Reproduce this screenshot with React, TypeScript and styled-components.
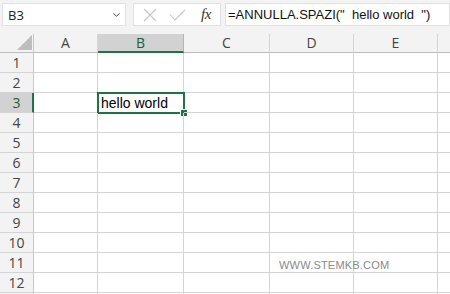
import React from "react";
import styled, { createGlobalStyle } from "styled-components";

const Global = createGlobalStyle`
  html, body { margin: 0; padding: 0; background: #ffffff; overflow: hidden; }
  body { width: 450px; height: 294px; font-family: "Liberation Sans", Arial, sans-serif; }
`;

const COLS = [
  { key: "A", w: 64 },
  { key: "B", w: 86 },
  { key: "C", w: 86 },
  { key: "D", w: 84 },
  { key: "E", w: 84 },
  { key: "", w: 60 },
];
const ROW_HEAD = 34;
const ROWS = Array.from({ length: 13 }, (_, i) => i + 1);
const GREEN = "#217346";
const GRID = "#d4d4d4";

const Page = styled.div`
  width: 450px;
  height: 294px;
  overflow: hidden;
  display: flex;
  flex-direction: column;
`;

const Toolbar = styled.div`
  height: 34px;
  box-sizing: border-box;
  padding: 3px 0 0 2px;
  background: #f3f3f3;
  display: flex;
  align-items: flex-start;
  flex-shrink: 0;
`;

const Box = styled.div<{ $w?: number; $ml?: number }>`
  height: 23px;
  box-sizing: border-box;
  background: #ffffff;
  border: 1px solid #e1e1e1;
  display: flex;
  align-items: center;
  margin-left: ${(p) => p.$ml ?? 0}px;
  ${(p) => (p.$w ? `width: ${p.$w}px; flex-shrink: 0;` : "flex: 1; min-width: 0;")}
`;

const NameText = styled.span`
  font-family: "Open Sans", "Noto Sans", sans-serif;
  font-size: 13px;
  color: #222;
  padding-left: 5px;
  flex: 1;
`;

const Chevron = styled.svg`
  margin-right: 5px;
`;

const IconSlot = styled.div<{ $ml: number }>`
  margin-left: ${(p) => p.$ml}px;
  display: flex;
  align-items: center;
`;

const Fx = styled.span`
  font-family: "Liberation Serif", "DejaVu Serif", serif;
  font-style: italic;
  font-size: 15px;
  color: #333;
  margin-left: 15px;
  letter-spacing: -0.5px;
`;

const FormulaText = styled.span`
  font-family: "Liberation Sans", Arial, sans-serif;
  font-size: 13px;
  color: #111;
  white-space: pre;
  padding-left: 2px;
`;

const Sheet = styled.div`
  display: grid;
  grid-template-columns: ${ROW_HEAD}px ${COLS.map((c) => `${c.w}px`).join(" ")};
  grid-auto-rows: 20px;
  grid-template-rows: 19px;
  background: #ffffff;
`;

const Corner = styled.div`
  background: #f3f3f3;
  border-right: 1px solid #c8c8c8;
  border-bottom: 1px solid #bdbdbd;
  box-sizing: border-box;
  position: relative;
`;

const CornerTri = styled.div`
  position: absolute;
  right: 1px;
  bottom: 2px;
  width: 0;
  height: 0;
  border-left: 15px solid transparent;
  border-bottom: 15px solid #bdbdbd;
`;

const ColHead = styled.div<{ $sel?: boolean }>`
  box-sizing: border-box;
  background: ${(p) => (p.$sel ? "#d2d2d2" : "#f3f3f3")};
  border-right: 1px solid ${(p) => (p.$sel ? "#b4b4b4" : GRID)};
  border-bottom: ${(p) => (p.$sel ? `2px solid ${GREEN}` : "1px solid #bdbdbd")};
  font-family: "Open Sans", "Noto Sans", sans-serif;
  font-size: 14px;
  line-height: 18px;
  text-align: center;
  color: ${(p) => (p.$sel ? "#1d5c3a" : "#444")};
`;

const RowHead = styled.div<{ $sel?: boolean }>`
  box-sizing: border-box;
  background: ${(p) => (p.$sel ? "#d2d2d2" : "#f3f3f3")};
  border-right: ${(p) => (p.$sel ? `2px solid ${GREEN}` : "1px solid #c8c8c8")};
  border-bottom: 1px solid ${GRID};
  font-family: "Open Sans", "Noto Sans", sans-serif;
  font-size: 14px;
  line-height: 19px;
  text-align: center;
  padding-left: ${(p) => (p.$sel ? 1 : 0)}px;
  color: ${(p) => (p.$sel ? "#1d5c3a" : "#444")};
`;

const Cell = styled.div`
  box-sizing: border-box;
  border-right: 1px solid ${GRID};
  border-bottom: 1px solid ${GRID};
  position: relative;
  font-family: "Liberation Sans", Arial, sans-serif;
  font-size: 14px;
  line-height: 19px;
  padding-top: 1px;
  color: #000;
  padding-left: 3px;
  white-space: pre;
  overflow: visible;
`;

const Selection = styled.div`
  position: absolute;
  left: -1px;
  top: -1px;
  right: -2px;
  bottom: -2px;
  border: 2px solid ${GREEN};
  pointer-events: none;
`;

const Handle = styled.div`
  position: absolute;
  right: -5px;
  bottom: -5px;
  width: 6px;
  height: 6px;
  background: ${GREEN};
  border: 1px solid #ffffff;
`;

const Watermark = styled.span`
  position: absolute;
  left: 9px;
  top: 3px;
  font-family: "Liberation Sans", Arial, sans-serif;
  font-size: 11px;
  letter-spacing: 0.2px;
  color: #8a8a8a;
  white-space: nowrap;
`;

export default function App() {
  return (
    <>
      <Global />
      <Page>
        <Toolbar>
          <Box $w={124}>
            <NameText>B3</NameText>
            <Chevron width="7" height="4" viewBox="0 0 7 4">
              <path d="M0.5 0.5 L3.5 3.2 L6.5 0.5" fill="none" stroke="#444" strokeWidth="1" />
            </Chevron>
          </Box>
          <Box $w={88} $ml={7}>
            <IconSlot $ml={9}>
              <svg width="14" height="14" viewBox="0 0 14 14">
                <path d="M1 1 L13 13 M13 1 L1 13" stroke="#c6c6c6" strokeWidth="1.1" fill="none" />
              </svg>
            </IconSlot>
            <IconSlot $ml={12}>
              <svg width="17" height="12" viewBox="0 0 17 12">
                <path d="M1 5.5 L6 11 L16 1" stroke="#c6c6c6" strokeWidth="1.1" fill="none" />
              </svg>
            </IconSlot>
            <Fx>fx</Fx>
          </Box>
          <Box $ml={4}>
            <FormulaText>{'=ANNULLA.SPAZI("  hello world  ")'}</FormulaText>
          </Box>
        </Toolbar>
        <Sheet>
          <Corner>
            <CornerTri />
          </Corner>
          {COLS.map((c, i) => (
            <ColHead key={i} $sel={c.key === "B"}>
              {c.key}
            </ColHead>
          ))}
          {ROWS.map((r) => (
            <React.Fragment key={r}>
              <RowHead $sel={r === 3}>{r <= 12 ? r : ""}</RowHead>
              {COLS.map((c, ci) => {
                const isB3 = r === 3 && c.key === "B";
                const isWm = r === 11 && c.key === "D";
                return (
                  <Cell key={ci}>
                    {isB3 ? "hello world" : null}
                    {isB3 ? (
                      <Selection>
                        <Handle />
                      </Selection>
                    ) : null}
                    {isWm ? <Watermark>WWW.STEMKB.COM</Watermark> : null}
                  </Cell>
                );
              })}
            </React.Fragment>
          ))}
        </Sheet>
      </Page>
    </>
  );
}
